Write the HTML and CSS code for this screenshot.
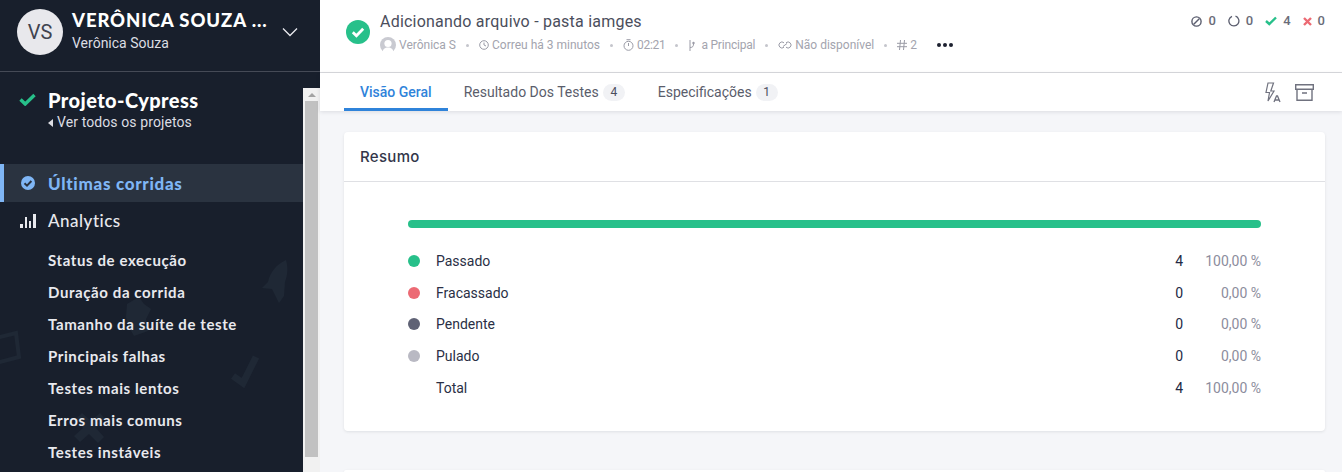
FILE: index.html
```html
<!DOCTYPE html>
<html lang="pt-BR">
<head>
  <meta charset="UTF-8" />
  <title>Adicionando arquivo - pasta iamges</title>
  <link rel="stylesheet" href="styles.css">
</head>
<body>
  <div class="app">
    <!-- SIDEBAR -->
    <aside class="sidebar">
      <div class="org">
        <div class="avatar">VS</div>
        <div class="org-text">
          <div class="org-name">VERÔNICA SOUZA ...</div>
          <div class="org-user">Verônica Souza</div>
        </div>
        <svg class="org-caret" width="16" height="10" viewBox="0 0 16 10"><path d="M1 1.5l7 7 7-7" fill="none" stroke="#e8e9ee" stroke-width="1.3"/></svg>
      </div>
      <div class="side-body">
        <div class="side-scroll">
          <!-- marcas de fundo -->
          <svg class="side-bg" width="303" height="400" viewBox="0 0 303 400">
            <g fill="#1f2835">
              <path d="M286 188c-9 4-16 12-18 22l-6 6 10 1 4 8 3 6 5-7 1-14c3-8 3-15 1-22z"/>
              <path d="M127 232l12-7 5 7 7 5-5 10 2 12-14 5-5-9-3-10z"/>
              <path d="M76 347l6-6 9 8 9-8 5 6-9 9 8 9-6 6-9-9-9 8-6-6 9-8z"/>
            </g>
            <g fill="none" stroke="#1f2835">
              <path d="M-4 266l20-5 3 24-23 6" stroke-width="4"/>
              <path d="M233 304l10 7 13-26" stroke-width="7"/>
            </g>
          </svg>
          <div class="project">
            <svg class="project-check" width="17" height="13" viewBox="0 0 17 13"><path d="M1.5 6.5l4.7 4.5L15.5 2" fill="none" stroke="#27c08a" stroke-width="3.4"/></svg>
            <div>
              <div class="project-name">Projeto-Cypress</div>
              <div class="project-back"><span class="back-arrow"></span>Ver todos os projetos</div>
            </div>
          </div>
          <nav class="nav">
            <div class="nav-item active">
              <svg class="nav-icon" width="16" height="16" viewBox="0 0 16 16"><circle cx="8" cy="8" r="7" fill="#7fb6f5"/><path d="M4.5 8.2l2.5 2.4 4.4-4.6" fill="none" stroke="#2a3340" stroke-width="2"/></svg>
              Últimas corridas
            </div>
            <div class="nav-item">
              <svg class="nav-icon" width="16" height="16" viewBox="0 0 16 16"><path d="M0 11h3v4H0zM5 4h2v11H5zM9 8h2v7H9zM13 1h3v14h-3z" fill="#e8e9ee"/></svg>
              <span class="nav-label">Analytics</span>
            </div>
            <ul class="sub-nav">
              <li>Status de execução</li>
              <li>Duração da corrida</li>
              <li>Tamanho da suíte de teste</li>
              <li>Principais falhas</li>
              <li>Testes mais lentos</li>
              <li>Erros mais comuns</li>
              <li>Testes instáveis</li>
            </ul>
          </nav>
        </div>
        <div class="scrollbar">
          <div class="scroll-arrow"></div>
          <div class="scroll-thumb"></div>
        </div>
      </div>
    </aside>

    <!-- MAIN -->
    <main class="main">
      <header class="run-header">
        <svg class="run-status" width="24" height="24" viewBox="0 0 24 24"><circle cx="12" cy="12" r="12" fill="#27c08a"/><path d="M6.8 12.3l3.6 3.4 6.8-7" fill="none" stroke="#fff" stroke-width="2.8"/></svg>
        <div class="run-info">
          <div class="run-title">Adicionando arquivo - pasta iamges</div>
          <div class="run-meta">
            <span class="meta-item">
              <svg width="16" height="16" viewBox="0 0 16 16"><circle cx="8" cy="8" r="8" fill="#c9cad1"/><circle cx="8" cy="6.5" r="3.6" fill="#fff"/><path d="M2.5 16c0-4 2.5-5.5 5.5-5.5s5.5 1.5 5.5 5.5z" fill="#fff"/></svg>
              Verônica S
            </span>
            <span class="meta-dot"></span>
            <span class="meta-item">
              <svg width="10" height="10" viewBox="0 0 10 10"><circle cx="5" cy="5" r="4.3" fill="none" stroke="#9a9ba6"/><path d="M5 2.5V5l2 1" fill="none" stroke="#9a9ba6"/></svg>
              Correu há 3 minutos
            </span>
            <span class="meta-dot"></span>
            <span class="meta-item">
              <svg width="11" height="12" viewBox="0 0 11 12"><circle cx="5.5" cy="6.8" r="4.5" fill="none" stroke="#9a9ba6"/><path d="M3.5.7h4M5.5 4v3" fill="none" stroke="#9a9ba6"/></svg>
              <span class="meta-time">02:21</span>
            </span>
            <span class="meta-dot"></span>
            <span class="meta-item branch">
              <svg width="7" height="11" viewBox="0 0 7 11"><path d="M2 0v11M2 7.5c3 0 3.500-1.500 3.500-3.500" fill="none" stroke="#9a9ba6"/><circle cx="5.5" cy="3" r="1.2" fill="#9a9ba6"/></svg>
              a Principal
            </span>
            <span class="meta-dot"></span>
            <span class="meta-item">
              <svg width="14" height="8" viewBox="0 0 14 8"><path d="M6 1.800A3 3 0 1 0 6 6.200M8 1.800A3 3 0 1 1 8 6.200M5 5.500L9 2.500" fill="none" stroke="#9a9ba6"/></svg>
              Não disponível
            </span>
            <span class="meta-dot"></span>
            <span class="meta-item">
              <svg width="10" height="10" viewBox="0 0 10 10"><path d="M3.500 0L2.500 10M7.500 0l-1 10M0 3.300h10M0 6.700h10" fill="none" stroke="#9a9ba6"/></svg>
              2
            </span>
            <span class="meta-more"><i></i><i></i><i></i></span>
          </div>
        </div>
        <div class="run-counts">
          <span class="count">
            <svg width="11" height="11" viewBox="0 0 11 11"><circle cx="5.5" cy="5.5" r="4.6" fill="none" stroke="#5a5d6e" stroke-width="1.4"/><path d="M2.500 8.500l6-6" stroke="#5a5d6e" stroke-width="1.4"/></svg>0
          </span>
          <span class="count">
            <svg width="12" height="12" viewBox="0 0 12 12"><path d="M7.500 1.200a5 5 0 1 1-3.500.1" fill="none" stroke="#5a5d6e" stroke-width="1.3"/></svg>0
          </span>
          <span class="count">
            <svg width="12" height="10" viewBox="0 0 12 10"><path d="M1 5l3.300 3L11 1.500" fill="none" stroke="#27c08a" stroke-width="2.4"/></svg>4
          </span>
          <span class="count">
            <svg width="9" height="9" viewBox="0 0 9 9"><path d="M1 1l7 7M8 1L1 8" fill="none" stroke="#ec6a74" stroke-width="2.4"/></svg>0
          </span>
        </div>
      </header>

      <div class="tabs">
        <a class="tab active">Visão Geral</a>
        <a class="tab">Resultado Dos Testes <span class="tab-badge">4</span></a>
        <a class="tab">Especificações <span class="tab-badge">1</span></a>
        <div class="tab-tools">
          <svg width="16" height="21" viewBox="0 0 16 21"><path d="M8.500 1H3L1 10.500h3.500L3 19l6-10H5.800z" fill="none" stroke="#70727f" stroke-width="1.2"/><path d="M9 20l2.500-6h1l2.500 6M10 18h4" fill="none" stroke="#70727f" stroke-width="1.3"/></svg>
          <svg width="19" height="17" viewBox="0 0 19 17"><path d="M.7.700h17.600v4.600H.7zM2 5.300v11h15v-11M7 9h5" fill="none" stroke="#70727f" stroke-width="1.4"/></svg>
        </div>
      </div>

      <section class="content">
        <div class="card">
          <h3 class="card-title">Resumo</h3>
          <div class="card-body">
            <div class="progress"></div>
            <div class="stats">
              <div class="stat"><span class="dot passed"></span><span class="stat-name">Passado</span><span class="stat-num">4</span><span class="stat-pct">100,00 %</span></div>
              <div class="stat"><span class="dot failed"></span><span class="stat-name">Fracassado</span><span class="stat-num">0</span><span class="stat-pct">0,00 %</span></div>
              <div class="stat"><span class="dot pending"></span><span class="stat-name">Pendente</span><span class="stat-num">0</span><span class="stat-pct">0,00 %</span></div>
              <div class="stat"><span class="dot skipped"></span><span class="stat-name">Pulado</span><span class="stat-num">0</span><span class="stat-pct">0,00 %</span></div>
              <div class="stat"><span class="dot"></span><span class="stat-name">Total</span><span class="stat-num">4</span><span class="stat-pct">100,00 %</span></div>
            </div>
          </div>
        </div>
        <div class="card card-next"></div>
      </section>
    </main>
  </div>
</body>
</html>
```

FILE: styles.css
```css
html, body {
  margin: 0;
  height: 472px;
  overflow: hidden;
}

body {
  background: #f5f6f9;
  color: #2f3447;
  font-family: Roboto, Arial, sans-serif;
}

.app {
  display: flex;
  height: 472px;
}

/* sidebar */
.sidebar {
  width: 320px;
  flex: none;
  display: flex;
  flex-direction: column;
  background: #181f2c;
  color: #e8e9ee;
  font-family: Lato, "Open Sans", sans-serif;
}

.org {
  height: 64px;
  flex: none;
  display: flex;
  align-items: center;
  padding: 0 22px 7px 17px;
  border-bottom: 1px solid #454a56;
}

.avatar {
  width: 46px;
  height: 46px;
  flex: none;
  border-radius: 50%;
  background: #e8e8ec;
  color: #40434f;
  font-family: Roboto, sans-serif;
  font-size: 20px;
  line-height: 46px;
  text-align: center;
}

.org-text {
  margin-left: 9px;
  padding-bottom: 3px;
  flex: 1;
  white-space: nowrap;
}

.org-name {
  font-size: 18.5px;
  font-weight: 900;
  letter-spacing: .9px;
  line-height: 22px;
  color: #fff;
}

.org-user {
  font-family: Roboto, sans-serif;
  font-size: 14px;
  line-height: 18px;
  margin-top: 3px;
  color: #dcdde3;
}

.side-body {
  flex: 1;
  display: flex;
  min-height: 0;
}

.side-scroll {
  flex: 1;
  min-width: 0;
  position: relative;
  overflow: hidden;
}

.side-bg {
  position: absolute;
  left: 0;
  top: 0;
}

.project, .nav {
  position: relative;
}

.project {
  display: flex;
  padding: 17px 0 0 19px;
  height: 75px;
}

.project-check {
  margin: 4px 12px 0 0;
}

.project-name {
  font-size: 20px;
  font-weight: 900;
  letter-spacing: .42px;
  line-height: 22px;
  color: #fff;
}

.project-back {
  font-family: Roboto, sans-serif;
  font-size: 14px;
  line-height: 18px;
  letter-spacing: .1px;
  margin-top: 2px;
  color: #dcdde3;
}

.back-arrow {
  display: inline-block;
  width: 0;
  height: 0;
  margin-right: 4px;
  border: 4px solid transparent;
  border-left: 0;
  border-right: 5px solid #dcdde3;
}

.nav-item {
  height: 38px;
  display: flex;
  align-items: center;
  padding-left: 20px;
  font-size: 17px;
  font-weight: 500;
  letter-spacing: .5px;
  box-sizing: border-box;
}

.nav-label {
  padding-bottom: 2px;
}

.nav-item.active {
  background: #2a3340;
  border-left: 4px solid #7fb6f5;
  padding-left: 16px;
  color: #7fb6f5;
  font-weight: 900;
  letter-spacing: .7px;
}

.nav-icon {
  width: 16px;
  margin-right: 12px;
}

.sub-nav {
  list-style: none;
  margin: 0;
  padding: 4px 0 0 48px;
}

.sub-nav li {
  height: 32px;
  line-height: 32px;
  font-size: 15px;
  font-weight: 700;
  letter-spacing: .6px;
  white-space: nowrap;
}

.scrollbar {
  width: 17px;
  flex: none;
  margin-top: 16px;
  background: #f1f1f1;
  padding: 0 2px;
  box-sizing: border-box;
}

.scroll-arrow {
  width: 0;
  height: 0;
  margin: 5px auto 4px;
  border: 4px solid transparent;
  border-top: 0;
  border-bottom: 4px solid #a3a3a3;
}

.scroll-thumb {
  height: 356px;
  background: #c1c1c1;
  margin-top: 4px;
}

/* main */
.main {
  flex: 1;
  min-width: 0;
  display: flex;
  flex-direction: column;
}

.run-header {
  height: 72px;
  flex: none;
  display: flex;
  background: #fff;
  border-bottom: 1px solid #d9dade;
  padding: 0 17px 0 26px;
}

.run-status {
  margin-top: 20px;
  margin-right: 10px;
}

.run-info {
  flex: 1;
  padding-top: 12px;
}

.run-title {
  font-size: 16px;
  line-height: 20px;
  letter-spacing: .22px;
  color: #4b4e5c;
}

.run-meta {
  display: flex;
  align-items: center;
  margin-top: 3px;
  height: 20px;
  font-size: 12px;
  color: #a3a4ae;
}

.meta-item {
  display: inline-flex;
  align-items: center;
  gap: 3px;
}

.meta-item.branch {
  gap: 6px;
  letter-spacing: -.2px;
}

.meta-time {
  letter-spacing: -.3px;
}

.meta-dot {
  width: 3px;
  height: 3px;
  margin: 0 10px;
  border-radius: 50%;
  background: #c4c5cc;
}

.meta-more {
  display: inline-flex;
  gap: 2px;
  margin-left: 20px;
}

.meta-more i {
  width: 4px;
  height: 4px;
  border-radius: 50%;
  background: #1d2130;
}

.run-counts {
  display: flex;
  gap: 12px;
  padding-top: 14px;
  height: 14px;
  font-size: 13px;
  font-weight: 500;
  color: #6a6c79;
}

.count {
  display: inline-flex;
  align-items: center;
  gap: 6px;
  line-height: 14px;
}

.tabs {
  height: 38px;
  flex: none;
  display: flex;
  background: #fff;
  padding: 0 28px 0 24px;
  box-shadow: 0 1px 4px rgba(30, 35, 50, .12);
  box-sizing: border-box;
  position: relative;
}

.tab {
  display: flex;
  align-items: center;
  padding: 0 16px 1px;
  font-size: 14px;
  color: #5a5d6b;
  white-space: nowrap;
  box-sizing: border-box;
}

.tab + .tab + .tab {
  margin-left: 1px;
}

.tab.active {
  color: #2f83da;
  font-weight: 500;
  border-bottom: 3px solid #2f83da;
  padding-top: 3px;
  padding-bottom: 0;
}

.tab-badge {
  display: inline-block;
  min-width: 22px;
  height: 17px;
  margin-left: 4px;
  margin-top: 2px;
  border-radius: 9px;
  background: #f1f2f5;
  font-size: 12px;
  line-height: 17px;
  text-align: center;
  color: #4b4e5c;
}

.tab-tools {
  margin-left: auto;
  display: flex;
  align-items: center;
  gap: 14px;
}

.content {
  flex: 1;
  min-height: 0;
  overflow: hidden;
  padding: 21px 17px 0 24px;
}

.card {
  background: #fff;
  border-radius: 4px;
  box-shadow: 0 1px 3px rgba(30, 35, 50, .1);
  height: 299px;
}

.card-next {
  margin-top: 39px;
  height: 2px;
  border-radius: 4px 4px 0 0;
}

.card-title {
  margin: 0;
  padding: 0 16px;
  height: 49px;
  line-height: 50px;
  font-family: Inter, sans-serif;
  font-size: 15px;
  font-weight: 500;
  letter-spacing: .3px;
  color: #33364a;
  border-bottom: 1px solid #dfe0e4;
}

.card-body {
  padding: 38px 64px 0;
}

.progress {
  height: 8px;
  border-radius: 4px;
  background: #27c08a;
}

.stats {
  margin-top: 17.5px;
}

.stat {
  display: flex;
  align-items: center;
  height: 31.6px;
  font-size: 14px;
  color: #2a2f45;
}

.dot {
  width: 12px;
  height: 12px;
  flex: none;
  border-radius: 50%;
  margin-right: 16px;
}

.dot.passed { background: #27c08a; }
.dot.failed { background: #ec6a74; }
.dot.pending { background: #5f6275; }
.dot.skipped { background: #b9b9c3; }

.stat-name {
  flex: 1;
}

.stat-num {
  width: 60px;
  text-align: right;
  color: #232845;
}

.stat-pct {
  width: 78px;
  text-align: right;
  color: #8c8d9d;
}
```
